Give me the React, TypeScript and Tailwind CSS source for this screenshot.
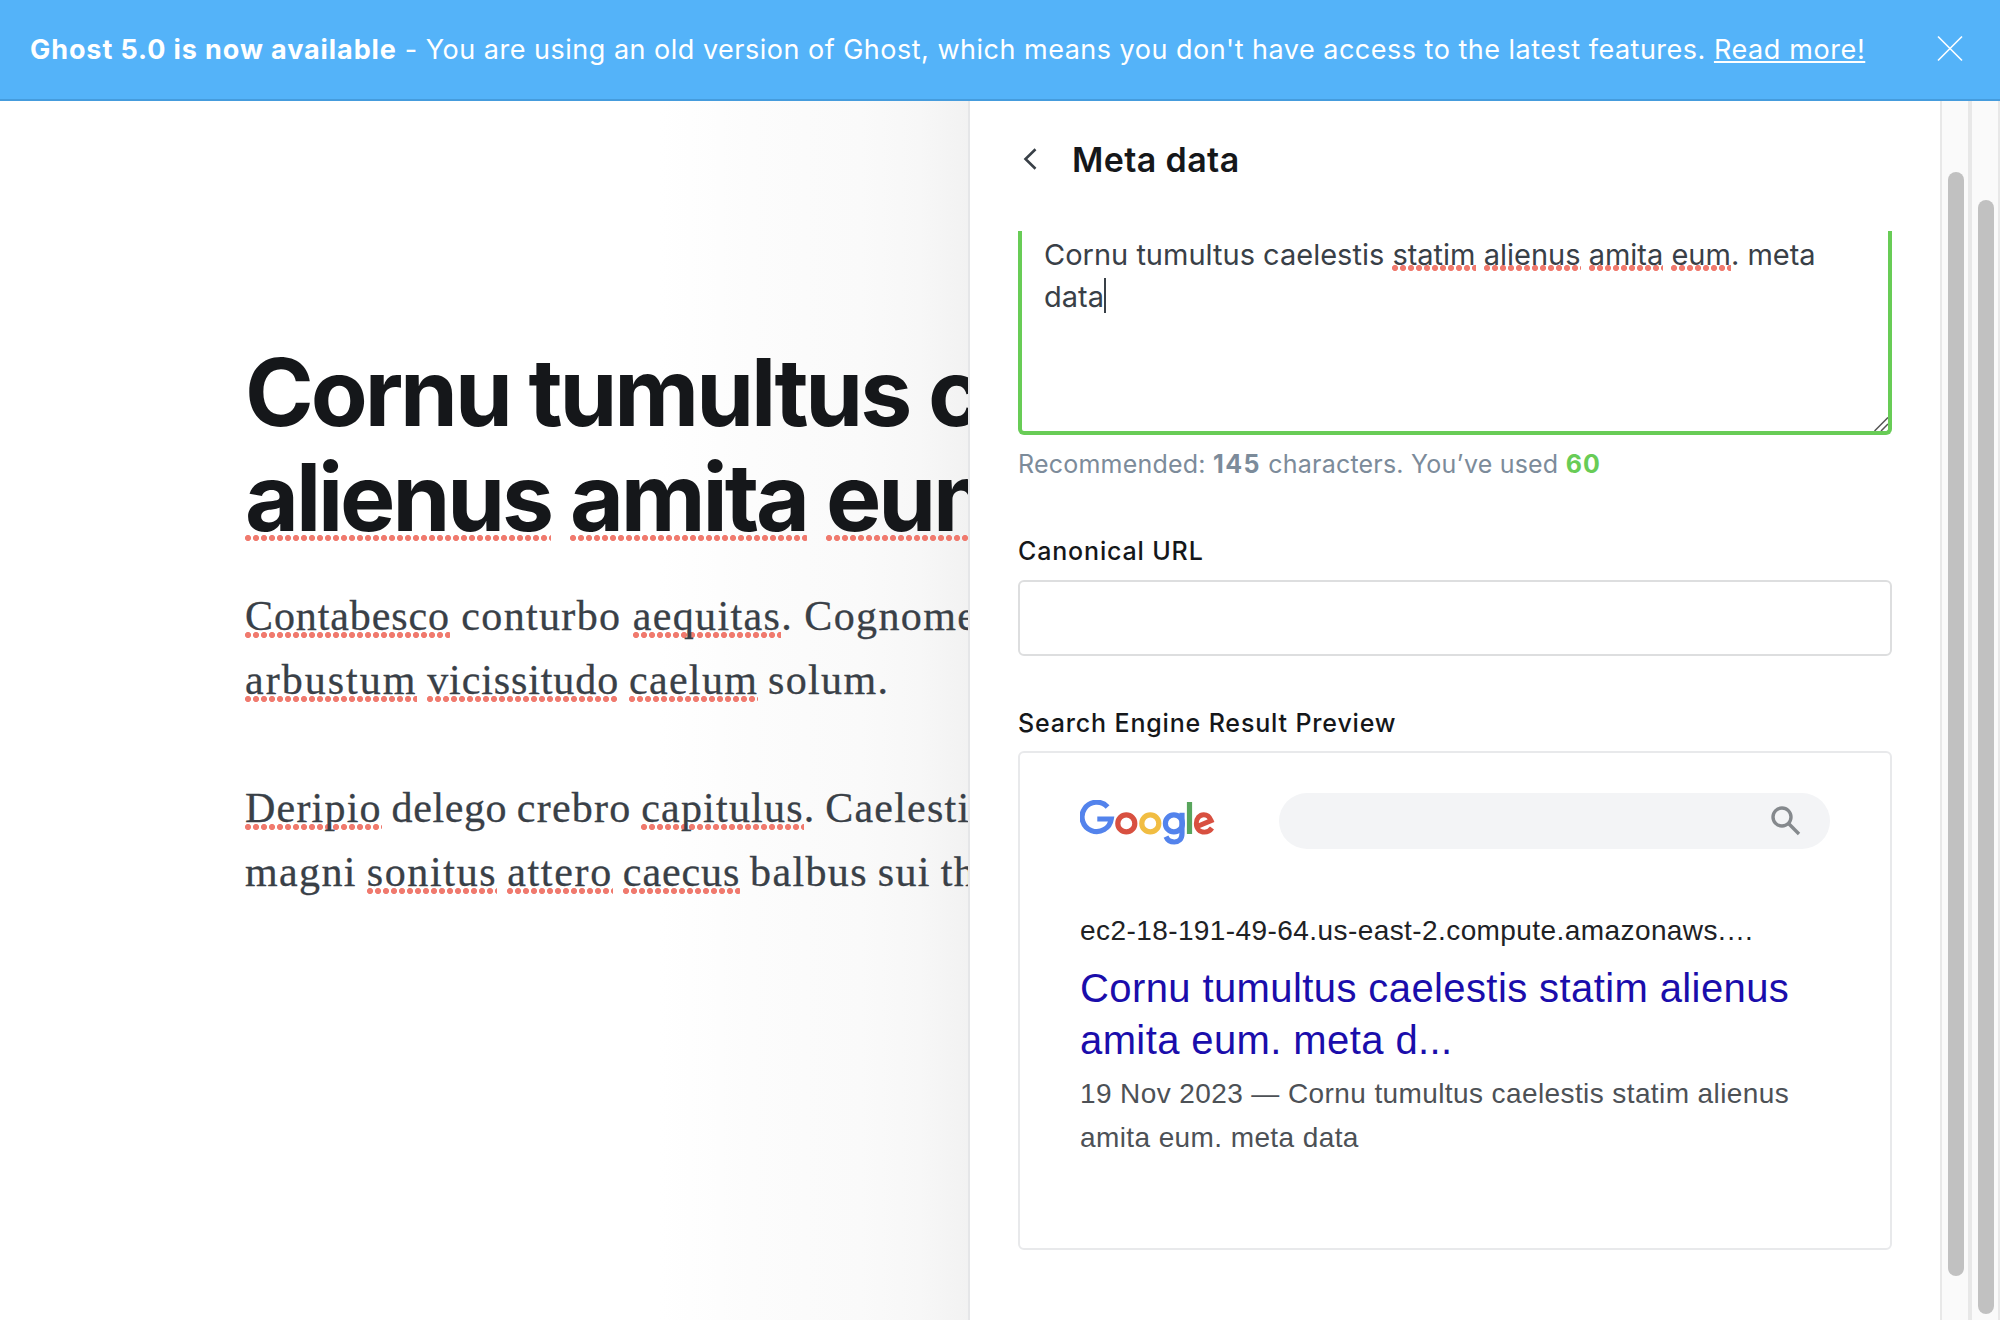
import type { ReactNode } from 'react';

const dots =
  'bg-[radial-gradient(circle_at_3px_3px,#f07a6e_2.7px,transparent_3.4px)] bg-repeat-x [background-size:8px_6px]';

function TitleMiss({ children }: { children: ReactNode }) {
  return <span className={`${dots} [background-position:0_94px]`}>{children}</span>;
}

function BodyMiss({ children, className = '' }: { children: ReactNode; className?: string }) {
  return <span className={`${dots} [background-position:0_39px] ${className}`}>{children}</span>;
}

function FieldMiss({ children }: { children: ReactNode }) {
  return <span className={`${dots} [background-position:0_28px]`}>{children}</span>;
}

function Banner() {
  return (
    <header className="flex h-[101px] shrink-0 items-center justify-between border-b-2 border-[#459cdd] bg-[#54b3f9] pr-[37px] pl-[30px] text-[27px] leading-[40px] whitespace-nowrap text-white">
      <p className="tracking-[0.495px]">
        <strong className="font-bold tracking-[0.906px]">Ghost 5.0 is now available</strong> - You are using an old
        version of Ghost, which means you don't have access to the latest features.{' '}
        <a className="tracking-[0.6px] underline decoration-2 underline-offset-[2px]">Read more!</a>
      </p>
      <svg className="h-[26px] w-[26px] -translate-y-[1.5px]" viewBox="0 0 26 26" fill="none" stroke="#fff" strokeWidth="1.6">
        <path d="M1 1 25 25M25 1 1 25" />
      </svg>
    </header>
  );
}

function Editor() {
  return (
    <main className="w-[968px] shrink-0 overflow-hidden bg-[linear-gradient(to_right,#fff_660px,#fcfcfc_750px,#fafafa_860px,#f7f7f7_920px,#f2f2f2_968px)] pt-[239px] pl-[245px] whitespace-nowrap">
      <h1 className="text-[93px] leading-[105px] font-bold tracking-[-3.1px] text-[#15171a]">
        <div>Cornu tumultus caelestis</div>
        <div>
          <TitleMiss>alienus</TitleMiss> <TitleMiss>amita</TitleMiss> <TitleMiss>eum</TitleMiss>.
        </div>
      </h1>
      <div className="mt-[34px] flex flex-col gap-16 font-['Liberation_Serif',serif] text-[42px] leading-[64px] [word-spacing:-2px] text-[#394047] [-webkit-text-stroke:0.3px_#394047]">
        <div>
          <p className="tracking-[1.35px] [word-spacing:-0.5px]">
            <BodyMiss className="tracking-[0.9px]">Contabesco</BodyMiss> conturbo <BodyMiss>aequitas</BodyMiss>. Cognomen
          </p>
          <p className="tracking-[1.34px]">
            <BodyMiss className="tracking-[2px]">arbustum</BodyMiss>{' '}
            <BodyMiss className="tracking-[0.9px]">vicissitudo</BodyMiss> <BodyMiss>caelum</BodyMiss> solum.
          </p>
        </div>
        <div>
          <p className="tracking-[1.22px]">
            <BodyMiss>Deripio</BodyMiss> <span className="tracking-[0.6px]">delego</span> crebro{' '}
            <BodyMiss>capitulus</BodyMiss>. Caelestis
          </p>
          <p className="tracking-[1.37px]">
            magni <BodyMiss className="tracking-[1.65px]">sonitus</BodyMiss>{' '}
            <BodyMiss className="tracking-[1.7px]">attero</BodyMiss>{' '}
            <BodyMiss className="tracking-[0.9px]">caecus</BodyMiss> balbus sui theca
          </p>
        </div>
      </div>
    </main>
  );
}

function GoogleLogo() {
  return (
    <svg className="mt-[7px] h-[46px] w-[135px]" viewBox="0 0 135 46" fill="none" strokeWidth="5.2">
      <path stroke="#5383ec" d="M27.6 7A14.7 14.7 0 1 0 31.3 19H17.3" />
      <circle stroke="#d85040" cx="46.3" cy="23.4" r="8.5" />
      <circle stroke="#f1bd42" cx="70.3" cy="23.4" r="8.5" />
      <circle stroke="#5383ec" cx="93.9" cy="23.4" r="8.5" />
      <path stroke="#5383ec" d="M102 12.7V33.5C102 39.5 98.5 42 94.3 42C90 42 87.3 39.6 86 36.6" />
      <path stroke="#58a55c" d="M109.5 2V34" />
      <path
        stroke="#d85040"
        strokeWidth="4.9"
        d="M116.5 26.8 131.2 20.6C129.5 16.5 126.8 14.7 123.8 14.7C119.5 14.7 116.3 18.5 116.3 23.4C116.3 28.6 119.8 32.1 124.5 32.1C127.8 32.1 130.2 30.6 132 28"
      />
    </svg>
  );
}

function SearchPreview() {
  return (
    <section className="mt-[13px] h-[499px] rounded-md border-2 border-[#e8e9eb] pt-10 pl-[60px] font-['Liberation_Sans',Arial,sans-serif] whitespace-nowrap">
      <div className="flex items-start">
        <GoogleLogo />
        <div className="ml-[64px] flex h-14 w-[551px] items-center justify-end rounded-full bg-[#f3f4f6] pr-[29px]">
          <svg className="h-[30px] w-[30px]" viewBox="0 0 30 30" fill="none" stroke="#85898d" strokeWidth="3.4">
            <circle cx="11" cy="11" r="9" />
            <path d="M17.3 17.3 28 28" />
          </svg>
        </div>
      </div>
      <p className="mt-[66px] text-[28px] leading-8 tracking-[0.42px] text-[#202124]">
        ec2-18-191-49-64.us-east-2.compute.amazonaws.…
      </p>
      <h3 className="mt-[15px] text-[40px] leading-[52px] tracking-[0.4px] text-[#1a0dab]">
        Cornu tumultus caelestis statim alienus
        <br />
        amita eum. meta d...
      </h3>
      <p className="mt-[6px] text-[28px] leading-[44px] tracking-[0.4px] text-[#4d5156]">
        19 Nov 2023 — Cornu tumultus caelestis statim alienus
        <br />
        amita eum. meta data
      </p>
    </section>
  );
}

function MetaPanel() {
  return (
    <aside className="flex w-[972px] shrink-0 flex-col border-l-2 border-[#e5e6e8] bg-white pr-12 pl-12">
      <div className="flex h-[130px] items-center pb-[13px] pl-1">
        <svg className="h-[24px] w-[16px] -translate-y-px" viewBox="0 0 16 24" fill="none" stroke="#394047" strokeWidth="2.6">
          <path d="M13.5 2.2 3.5 12 13.5 21.8" />
        </svg>
        <h2 className="ml-[34px] text-[34px] leading-[40px] font-semibold tracking-[0.38px] text-[#15171a]">Meta data</h2>
      </div>
      <div className="relative h-[204px] rounded-b-md border-4 border-t-0 border-[#68cc56] pt-[2.5px] pl-[22px] text-[29px] leading-[42px] whitespace-nowrap text-[#394047]">
        Cornu tumultus caelestis <FieldMiss>statim</FieldMiss> <FieldMiss>alienus</FieldMiss>{' '}
        <FieldMiss>amita</FieldMiss> <FieldMiss>eum</FieldMiss>. meta
        <div className="flex">
          data
          <span className="mt-[2.5px] h-[35px] w-[2px] bg-[#394047]" />
        </div>
        <svg className="absolute right-0 bottom-0 h-[14px] w-[14px]" viewBox="0 0 14 14" fill="none" stroke="#555" strokeWidth="1.5">
          <path d="M.5 14 14 .5M7 14 14 7" />
        </svg>
      </div>
      <p className="mt-[14px] text-[25px] leading-[30px] tracking-[0.21px] whitespace-nowrap text-[#7c8b9a]">
        Recommended: <b className="font-bold tracking-[1.5px]">145</b> characters. You’ve used{' '}
        <b className="font-bold tracking-[1.2px] text-[#68cc56]">60</b>
      </p>
      <label className="mt-[57px] text-[25px] leading-[30px] font-medium tracking-[0.84px] text-[#15171a]">
        Canonical URL
      </label>
      <div className="mt-[14px] h-[76px] rounded-md border-2 border-[#dddedf]" />
      <h4 className="mt-[52px] text-[25px] leading-[30px] font-medium tracking-[0.84px] text-[#15171a]">
        Search Engine Result Preview
      </h4>
      <SearchPreview />
    </aside>
  );
}

export default function App() {
  return (
    <div className="flex h-[1320px] w-[2000px] flex-col overflow-hidden bg-white font-[Inter,sans-serif]">
      <Banner />
      <div className="flex min-h-0 flex-1">
        <Editor />
        <MetaPanel />
        <div className="w-[30px] shrink-0 border-x-2 border-[#e8e8e8] bg-[#fafafa] pt-[71px] pl-[6px]">
          <div className="h-[1104px] w-4 rounded-full bg-[#c1c1c1]" />
        </div>
        <div className="w-[30px] shrink-0 border-x-2 border-[#e8e8e8] bg-[#fafafa] pt-[99px] pl-[6px]">
          <div className="h-[1114px] w-4 rounded-full bg-[#c1c1c1]" />
        </div>
      </div>
    </div>
  );
}
